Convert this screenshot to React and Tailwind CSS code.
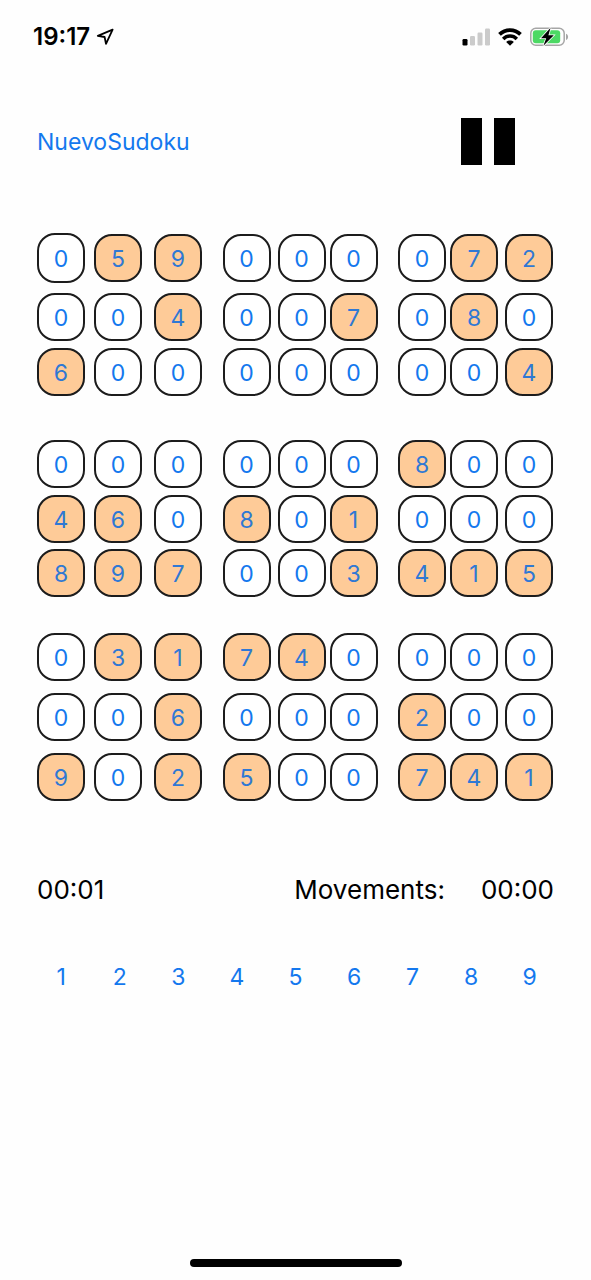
import React, { useState } from "react";

const BOARD = [
  [0, 5, 9, 0, 0, 0, 0, 7, 2],
  [0, 0, 4, 0, 0, 7, 0, 8, 0],
  [6, 0, 0, 0, 0, 0, 0, 0, 4],
  [0, 0, 0, 0, 0, 0, 8, 0, 0],
  [4, 6, 0, 8, 0, 1, 0, 0, 0],
  [8, 9, 7, 0, 0, 3, 4, 1, 5],
  [0, 3, 1, 7, 4, 0, 0, 0, 0],
  [0, 0, 6, 0, 0, 0, 2, 0, 0],
  [9, 0, 2, 5, 0, 0, 7, 4, 1],
];

const BAND_ROWS = [
  "grid-rows-[56px_62px_48px]",
  "grid-rows-[50px_60px_48px]",
  "grid-rows-[48px_72px_48px]",
];

const BLOCK_COLS = [
  "grid-cols-[57px_60px_48px]",
  "grid-cols-[55px_52px_48px]",
  "grid-cols-[52px_55px_48px]",
];

function Cell({ row, col, selected, onSelect }) {
  const value = BOARD[row][col];
  return (
    <button
      type="button"
      aria-label={`Row ${row + 1}, column ${col + 1}: ${value}`}
      onClick={onSelect}
      className={`flex w-12 items-center justify-center rounded-[18px] border-2 border-[#1c1c1c] pt-0.5 text-[23px] leading-8 ${
        selected ? "h-[50px]" : "h-12"
      } ${value ? "bg-[#fecb98] text-[#2f78d4]" : "bg-white text-[#1478ee]"}`}
    >
      {value}
    </button>
  );
}

function Band({ band, selected, onSelect }) {
  return (
    <div className="flex justify-between">
      {BLOCK_COLS.map((cols, block) => (
        <div key={block} className={`grid items-center ${cols} ${BAND_ROWS[band]}`}>
          {[0, 1, 2].map((r) =>
            [0, 1, 2].map((c) => {
              const row = band * 3 + r;
              const col = block * 3 + c;
              const id = row * 9 + col;
              return (
                <Cell
                  key={id}
                  row={row}
                  col={col}
                  selected={selected === id}
                  onSelect={() => onSelect(id)}
                />
              );
            })
          )}
        </div>
      ))}
    </div>
  );
}

function StatusBar() {
  return (
    <header className="flex h-[73px] items-center justify-between pr-[22px] pl-[33px]">
      <div className="flex items-center gap-1.5">
        <span className="text-2xl font-semibold">19:17</span>
        <svg width="18" height="18" viewBox="0 0 18 18" fill="none" aria-hidden="true">
          <path
            d="M16.6 1.6 L1.8 7.8 L8.6 9 L10 15.8 Z"
            stroke="black"
            strokeWidth="1.8"
            strokeLinejoin="round"
          />
        </svg>
      </div>
      <div className="flex items-center gap-2">
        <svg width="28" height="18" viewBox="0 0 28 18" aria-hidden="true">
          <rect x="0.5" y="11" width="5" height="6.5" rx="1.2" fill="#000" />
          <rect x="8" y="8" width="5" height="9.5" rx="1.2" fill="#cbcbcb" />
          <rect x="15.5" y="4.5" width="5" height="13" rx="1.2" fill="#cbcbcb" />
          <rect x="23" y="0.5" width="5" height="17" rx="1.2" fill="#cbcbcb" />
        </svg>
        <svg width="24" height="18" viewBox="0 0 24 18" aria-hidden="true">
          <path
            d="M1.5 6.4 C7.3 0.6 16.7 0.6 22.5 6.4"
            fill="none"
            stroke="#000"
            strokeWidth="3.8"
          />
          <path
            d="M5.2 10.9 C9 7.1 15 7.1 18.8 10.9"
            fill="none"
            stroke="#000"
            strokeWidth="3.5"
          />
          <path d="M12 17.8 L8.2 14 C10.3 12.1 13.7 12.1 15.8 14 Z" fill="#000" />
        </svg>
        <svg width="39" height="20" viewBox="0 0 39 20" aria-hidden="true">
          <rect x="0.8" y="1.2" width="33.4" height="17" rx="5" fill="none" stroke="#a6a6a6" strokeWidth="1.5" />
          <rect x="2.8" y="3.2" width="27.4" height="13" rx="3" fill="#4cd964" />
          <path d="M36 6.8 C38.8 7.8 38.8 12 36 13 Z" fill="#a6a6a6" />
          <path
            d="M20.6 0.8 L11 11.2 H16.2 L13.4 18.8 L23.8 8.2 H18.4 Z"
            fill="#000"
            stroke="#fff"
            strokeWidth="1.6"
            paintOrder="stroke"
          />
        </svg>
      </div>
    </header>
  );
}

export default function App() {
  const [selected, setSelected] = useState(0);
  const [paused, setPaused] = useState(false);

  return (
    <div className="flex min-h-screen flex-col bg-[#fefefe] font-['Inter','Liberation_Sans',sans-serif] text-black">
      <StatusBar />
      <main className="flex flex-1 flex-col">
        <div className="mt-[45px] flex items-center justify-between pr-[76px] pl-[37px]">
          <button type="button" className="text-[23px] leading-8 text-[#1478ee]">
            NuevoSudoku
          </button>
          <button
            type="button"
            aria-label="Pause"
            aria-pressed={paused}
            onClick={() => setPaused(!paused)}
            className="flex h-[47px] gap-3"
          >
            <span className="h-full w-[21px] bg-black" />
            <span className="h-full w-[21px] bg-black" />
          </button>
        </div>

        <section aria-label="Sudoku" className="mt-[65px] pr-[38px] pl-[37px]">
          <Band band={0} selected={selected} onSelect={setSelected} />
          <div className="mt-[43px] mb-9">
            <Band band={1} selected={selected} onSelect={setSelected} />
          </div>
          <Band band={2} selected={selected} onSelect={setSelected} />
        </section>

        <div className="mt-[73px] flex justify-between px-[37px] text-[26px] leading-8">
          <span>00:01</span>
          <div className="flex gap-9">
            <span>Movements:</span>
            <span>00:00</span>
          </div>
        </div>

        <div className="mt-[55px] grid grid-cols-9 px-8 text-[23px] leading-8 text-[#1478ee]">
          {[1, 2, 3, 4, 5, 6, 7, 8, 9].map((n) => (
            <button key={n} type="button">
              {n}
            </button>
          ))}
        </div>
      </main>
      <div className="flex justify-center pb-[13px]">
        <div className="h-2 w-[212px] rounded-full bg-black" />
      </div>
    </div>
  );
}
